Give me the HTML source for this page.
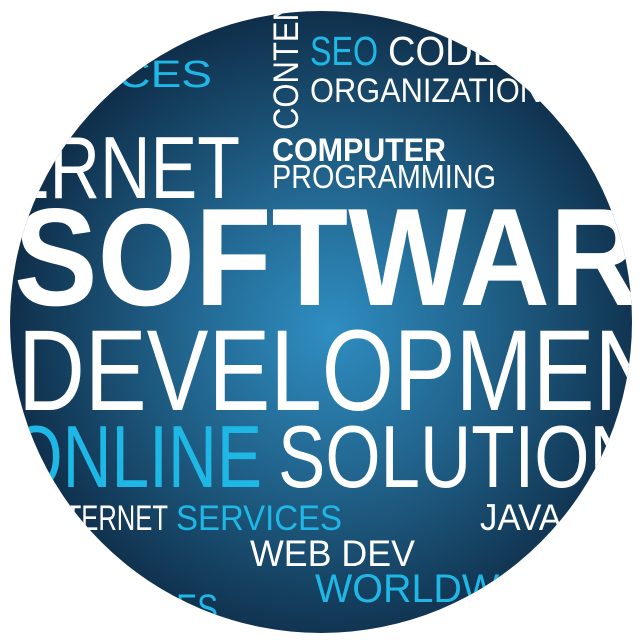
<!DOCTYPE html>
<html><head><style>
html,body{margin:0;padding:0;background:#fff;width:644px;height:644px;overflow:hidden}
svg{display:block}
text{font-family:"Liberation Sans",sans-serif}
</style></head><body>
<svg width="644" height="644" viewBox="0 0 644 644" xmlns="http://www.w3.org/2000/svg">
<defs>
<radialGradient id="g" cx="330" cy="330" r="320" gradientUnits="userSpaceOnUse">
<stop offset="0" stop-color="#2f8ec2"/>
<stop offset="0.45" stop-color="#22668f"/>
<stop offset="1" stop-color="#0f2f4b"/>
</radialGradient>
<clipPath id="c"><circle cx="321" cy="322" r="311"/></clipPath>
</defs>
<g clip-path="url(#c)">
<rect width="644" height="644" fill="url(#g)"/>
<g fill="#fff">
<text x="-20" y="87" font-size="38" fill="#1fb8e6" textLength="232" lengthAdjust="spacingAndGlyphs">SERVICES</text>
<text transform="translate(298,130) rotate(-90)" font-size="35" textLength="150" lengthAdjust="spacingAndGlyphs">CONTENT</text>
<text x="310" y="65" font-size="41" fill="#1fb8e6" textLength="68" lengthAdjust="spacingAndGlyphs">SEO</text>
<text x="388" y="65" font-size="41" textLength="110" lengthAdjust="spacingAndGlyphs">CODE</text>
<text x="310" y="102" font-size="34" textLength="232" lengthAdjust="spacingAndGlyphs">ORGANIZATION</text>
<text x="-110" y="198" font-size="88" font-weight="300" textLength="350" lengthAdjust="spacingAndGlyphs" style="font-weight:100">INTERNET</text>
<text x="272" y="161" font-size="32" font-weight="bold" textLength="174" lengthAdjust="spacingAndGlyphs">COMPUTER</text>
<text x="272" y="188" font-size="33" textLength="224" lengthAdjust="spacingAndGlyphs">PROGRAMMING</text>
<text x="14" y="305" font-size="139" font-weight="bold" textLength="710" lengthAdjust="spacingAndGlyphs">SOFTWARE</text>
<text x="18" y="410" font-size="115" textLength="700" lengthAdjust="spacingAndGlyphs">DEVELOPMENT</text>
<text x="10" y="487" font-size="88" fill="#1fb8e6" textLength="252" lengthAdjust="spacingAndGlyphs">ONLINE</text>
<text x="278" y="487" font-size="88" textLength="410" lengthAdjust="spacingAndGlyphs">SOLUTIONS</text>
<text x="40" y="530" font-size="35" textLength="128" lengthAdjust="spacingAndGlyphs">INTERNET</text>
<text x="176" y="530" font-size="35" fill="#1fb8e6" textLength="166" lengthAdjust="spacingAndGlyphs">SERVICES</text>
<text x="480" y="530" font-size="37" textLength="82" lengthAdjust="spacingAndGlyphs">JAVA</text>
<text x="250" y="566" font-size="37" textLength="165" lengthAdjust="spacingAndGlyphs">WEB DEV</text>
<text x="315" y="602" font-size="40" fill="#1fb8e6" textLength="250" lengthAdjust="spacingAndGlyphs">WORLDWIDE</text>
<text x="60" y="622" font-size="40" fill="#1fb8e6" textLength="158" lengthAdjust="spacingAndGlyphs">SERVICES</text>
</g>
</g>
</svg>
</body></html>
